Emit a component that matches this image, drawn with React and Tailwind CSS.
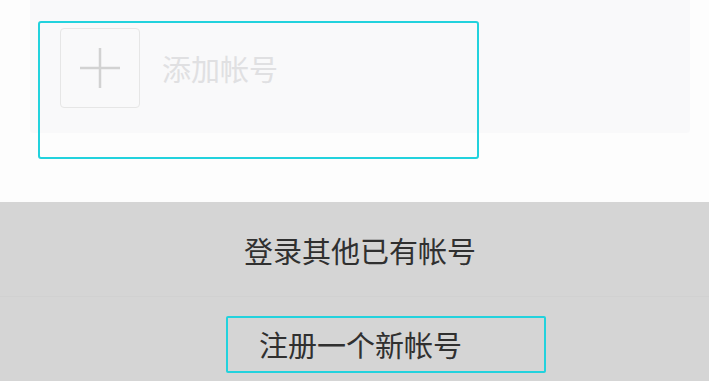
import React from 'react';

const App = () => {
  return (
    <div className="h-[381px] w-full overflow-hidden bg-[#fdfdfd] flex flex-col font-['Noto_Sans_CJK_SC','Noto_Sans',sans-serif]">
      {/* 帐号列表 */}
      <div className="relative h-[202px] shrink-0">
        <div className="ml-[30px] mr-[19px] h-[133px] bg-[#f9f9fa] rounded-b-sm">
          <div className="flex items-center gap-[22px] pl-[30px] pt-[28px]">
            <div className="w-[80px] h-[80px] rounded-[4px] border border-[#e6e6e6] bg-[#f9f9fa] flex items-center justify-center">
              <svg width="40" height="40" viewBox="0 0 40 40">
                <path d="M20 0V40M0 20H40" stroke="#d2d2d2" strokeWidth="2.5" />
              </svg>
            </div>
            <span className="text-[29px] leading-none text-[#e0e0e2]">添加帐号</span>
          </div>
        </div>
        {/* 焦点框 */}
        <div className="absolute left-[38px] top-[21px] w-[441px] h-[138px] border-2 border-[#22d2dd] rounded-[3px]" />
      </div>

      {/* 底部菜单 */}
      <div className="flex-1 bg-[#d5d5d5] flex flex-col">
        <div className="h-[95px] flex items-center justify-center pl-[11px] pt-[2px] border-b border-[#d1d1d1]">
          <span className="text-[29px] leading-none text-[#303030]">登录其他已有帐号</span>
        </div>
        <div className="pt-[19px] pl-[226px]">
          <div className="w-[320px] h-[57px] border-2 border-[#22d2dd] rounded-[2px] flex items-center pl-[31px]">
            <span className="text-[29px] leading-none text-[#303030]">注册一个新帐号</span>
          </div>
        </div>
      </div>
    </div>
  );
};

export default App;
